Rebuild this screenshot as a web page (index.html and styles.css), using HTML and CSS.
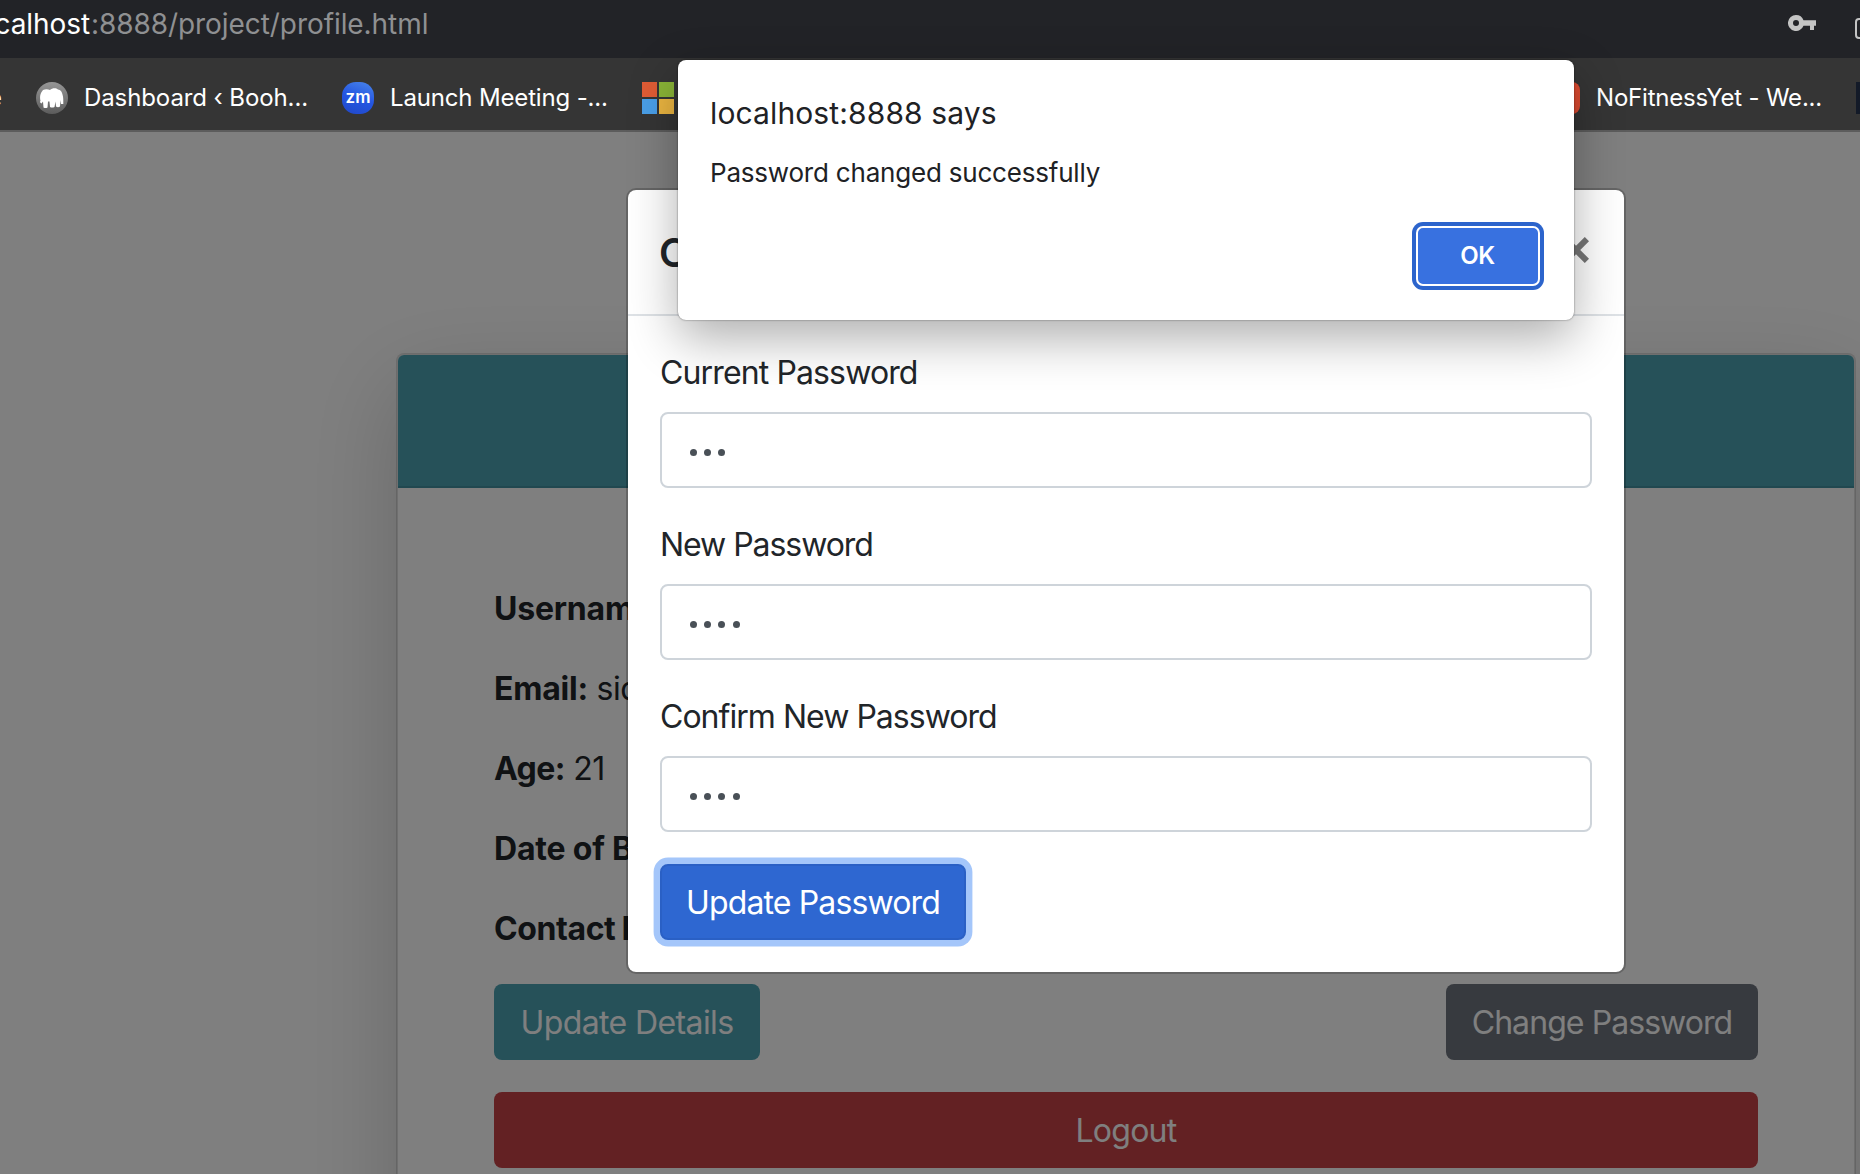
FILE: index.html
```html
<!DOCTYPE html>
<html lang="en">
<head>
<meta charset="utf-8">
<title>Profile</title>
<link rel="stylesheet" href="styles.css">
</head>
<body>
<div class="toolbar">
  <div class="url"><span class="host">localhost</span><span class="path">:8888/project/profile.html</span></div>
  <svg class="key" width="28" height="16" viewBox="0 0 28 16"><path fill-rule="evenodd" d="M8 0a8 8 0 1 0 7.5 10.7H22V15h4v-4.300H28V5.300H15.500A8 8 0 0 0 8 0zM8 5a3 3 0 1 1 0 6a3 3 0 0 1 0-6z" fill="#c4c4c4"/></svg>
  <span class="tool-box"></span>
</div>
<nav class="bookmarks">
  <span class="bm-cut">e</span>
  <svg class="bm-icon bm-first" viewBox="0 0 32 32"><defs><linearGradient id="g1" x1="0" y1="0" x2="0" y2="1"><stop offset="0" stop-color="#969696"/><stop offset="1" stop-color="#5c5c5c"/></linearGradient></defs><circle cx="16" cy="16" r="16" fill="url(#g1)"/><path d="M4.500 19c-1-5 0-8 2.500-11c2-1 5-1 7 0c2-2 6-2.500 8-.5c2.500 0 4 2.500 4.500 5c1 3 .8 6 .8 9.500h-2.300l-.5-4l-.5 6.500q-2 1.500-4 0l-.5-5l-1 5.500q-2.500 1-4.500 0l-.5-5.500l-1.500 0l-.5 6q-2 1-4 0l-.5-6l-1.500 2q-1.500-.5-1.500-2z" fill="#fff"/></svg>
  <span class="bm-text t-dash">Dashboard ‹ Booh...</span>
  <span class="bm-icon zm">zm</span>
  <span class="bm-text t-zoom">Launch Meeting -...</span>
  <svg class="bm-icon" viewBox="0 0 32 32"><path fill="#e05c35" d="M0 0h15v15H0z"/><path fill="#8ab437" d="M17 0h15v15H17z"/><path fill="#4a9fe8" d="M0 17h15v15H0z"/><path fill="#ecb641" d="M17 17h15v15H17z"/></svg>
  <span class="bm-icon red">Y</span>
  <span class="bm-text t-fit">NoFitnessYet - We...</span>
  <span class="bm-icon navy"></span>
</nav>
<main class="page">
  <section class="card">
    <div class="card-header"></div>
    <div class="card-body">
      <p><strong>Username:</strong></p>
      <p><strong>Email:</strong> sid</p>
      <p><strong class="age">Age:</strong> 21</p>
      <p><strong class="dob">Date of Birth:</strong></p>
      <p><strong class="contact">Contact Number:</strong></p>
      <div class="actions">
        <button class="btn btn-info">Update Details</button>
        <button class="btn btn-secondary">Change Password</button>
      </div>
      <button class="btn btn-danger">Logout</button>
    </div>
  </section>
  <div class="backdrop"></div>
  <section class="modal">
    <header class="modal-header">
      <h5>Change</h5>
      <svg width="26" height="26" viewBox="0 0 26 26"><path d="M2.100 2.100l21.800 21.800M23.900 2.100l-21.800 21.800" stroke="#777" stroke-width="6"/></svg>
    </header>
    <form class="modal-body">
      <label class="l1">Current Password</label>
      <div class="field"><i></i><i></i><i></i></div>
      <label class="l2">New Password</label>
      <div class="field"><i></i><i></i><i></i><i></i></div>
      <label class="l3">Confirm New Password</label>
      <div class="field"><i></i><i></i><i></i><i></i></div>
      <button class="btn btn-primary" type="button">Update Password</button>
    </form>
  </section>
</main>
<div class="alert">
  <div class="alert-title">localhost:8888 says</div>
  <div class="alert-text">Password changed successfully</div>
  <button class="ok">OK</button>
</div>
</body>
</html>
```
FILE: styles.css
```css
* { box-sizing: border-box; }
body {
  margin: 0;
  width: 1860px;
  height: 1174px;
  overflow: hidden;
  position: relative;
  display: flex;
  flex-direction: column;
  background: #fff;
  color: #212529;
  font-family: Inter, "Liberation Sans", sans-serif;
  font-size: 32px;
  line-height: 48px;
}
button { font-family: inherit; }

.toolbar {
  height: 58px;
  flex: none;
  display: flex;
  align-items: flex-start;
  background: #222327;
  overflow: hidden;
}
.url {
  flex: none;
  margin-left: -28px;
  width: 1816px;
  font-size: 28px;
  line-height: 49px;
  white-space: nowrap;
  letter-spacing: -.07px;
}
.host { color: #fff; margin-left: -1px; margin-right: 1px; }
.path { color: #8f9092; }
.key { flex: none; margin-top: 15px; }
.tool-box {
  flex: none;
  width: 30px;
  height: 21px;
  margin: 18px 0 0 39px;
  border: 2px solid #c4c4c4;
  border-radius: 4px;
}

.bookmarks {
  height: 74px;
  flex: none;
  display: flex;
  align-items: center;
  background: #353535;
  border-bottom: 2px solid #5c5c5c;
  padding-bottom: 8px;
  padding-top: 16px;
  color: #fff;
  font-size: 24px;
  line-height: 32px;
  white-space: nowrap;
  overflow: hidden;
}
.bm-cut { width: 14px; margin-left: -12px; }
.bm-icon { width: 32px; height: 32px; flex: none; }
.bm-first { margin-left: 34px; }
.bm-text { flex: none; margin-left: 16px; letter-spacing: -.16px; }
.t-dash { width: 258px; letter-spacing: -.1px; }
.t-zoom { width: 252px; }
.t-fit { width: 260px; letter-spacing: -.2px; }
.zm {
  border-radius: 14px;
  background: linear-gradient(200deg, #4a86ea, #2456e2 50%, #2148c8);
  font-size: 17px;
  font-weight: 600;
  line-height: 30px;
  text-align: center;
}
.red {
  margin-left: 874px;
  border-radius: 8px;
  background: #dc4a30;
  font-size: 22px;
  text-align: center;
}
.navy { background: #131a28; }

.page {
  flex: 1;
  position: relative;
  overflow: hidden;
  padding: 221px 4px 0 396px;
}
.card {
  height: 930px;
  border: 2px solid rgba(0, 0, 0, .125);
  border-radius: 8px;
  background: #fff;
  background-clip: padding-box;
  box-shadow: 0 32px 96px rgba(0, 0, 0, .18);
}
.card-header {
  height: 133px;
  background: #4ca2b3;
  border-bottom: 2px solid #4290a0;
  border-radius: 6px 6px 0 0;
}
.card-body { padding: 96px; }
.card-body p {
  margin: 0 0 32px;
  padding-top: 1px;
  height: 48px;
  white-space: nowrap;
  letter-spacing: -.5px;
}
.card-body strong { letter-spacing: -.2px; }
.card-body .age { letter-spacing: -.6px; }
.card-body .contact { letter-spacing: -.4px; word-spacing: -1px; }
.actions { display: flex; justify-content: space-between; margin-bottom: 32px; }
.btn {
  height: 76px;
  border: 0;
  padding: 2px 0 0;
  border-radius: 8px;
  color: #fff;
  font-size: 32px;
  line-height: 48px;
  text-align: center;
  white-space: nowrap;
  letter-spacing: -.5px;
}
.btn-info { width: 266px; background: #4ca2b3; letter-spacing: -.6px; }
.btn-secondary { width: 312px; background: #6e747e; letter-spacing: -.93px; }
.btn-danger { width: 1264px; background: #c64246; letter-spacing: -.75px; }
.backdrop { position: absolute; inset: 0; background: rgba(0, 0, 0, .5); }

.modal {
  position: absolute;
  left: 626px;
  top: 56px;
  width: 1000px;
  height: 786px;
  border: 2px solid rgba(0, 0, 0, .2);
  border-radius: 10px;
  background: #fff;
  background-clip: padding-box;
}
.modal-header {
  height: 126px;
  display: flex;
  justify-content: space-between;
  align-items: center;
  padding: 0 35px 4px 32px;
  border-bottom: 2px solid #dee2e6;
}
.modal-header h5 { margin: 5px 0 0 -1px; font-size: 40px; font-weight: 600; line-height: 60px; }
.modal-body { display: flex; flex-direction: column; align-items: flex-start; padding: 32px; }
.modal-body label { height: 48px; padding-top: 1px; margin-bottom: 16px; }
.l1 { letter-spacing: -.87px; }
.l2 { letter-spacing: -1.05px; }
.l3 { letter-spacing: -.97px; }
.field {
  display: flex;
  align-items: center;
  gap: 7.400px;
  width: 932px;
  height: 76px;
  margin-bottom: 32px;
  padding: 5px 28px 0 27.500px;
  border: 2px solid #ced4da;
  border-radius: 8px;
}
.field i { width: 7px; height: 7px; border-radius: 50%; background: #495057; }
.btn-primary {
  width: 306px;
  background: #2e67d1;
  border: 2px solid #2a60c5;
  box-shadow: 0 0 0 6.400px #a4c6fa;
  letter-spacing: -.87px;
}

.alert {
  position: absolute;
  left: 678px;
  top: 60px;
  width: 896px;
  height: 260px;
  padding: 32px;
  border-radius: 8px;
  background: #fff;
  color: #202124;
  display: flex;
  flex-direction: column;
  box-shadow: 0 0 2px rgba(0, 0, 0, .55), 0 18px 50px rgba(0, 0, 0, .32);
}
.alert-title { font-size: 30px; line-height: 42px; white-space: nowrap; letter-spacing: .12px; }
.alert-text { font-size: 26px; line-height: 36px; margin-top: 21px; white-space: nowrap; letter-spacing: -.2px; }
.ok {
  align-self: flex-end;
  width: 124px;
  height: 60px;
  margin: 35px 2px 0 0;
  padding: 0 1px 2px 0;
  border: 2px solid #fff;
  border-radius: 7px;
  background: #3871e0;
  box-shadow: 0 0 0 4px #2c64cc;
  color: #fff;
  font-size: 24px;
  font-weight: 600;
  letter-spacing: -.3px;
}
```
